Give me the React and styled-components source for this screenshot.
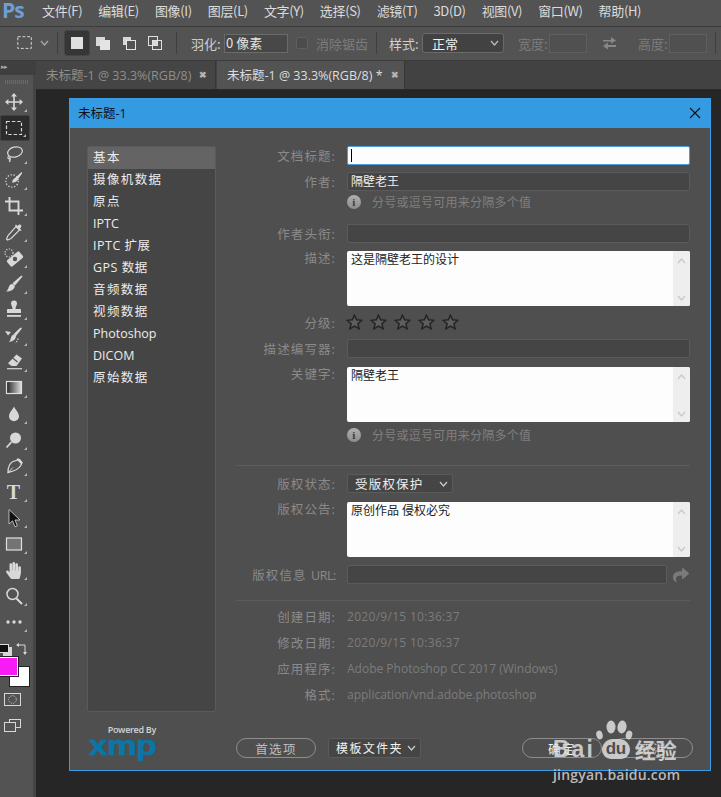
import styled, { createGlobalStyle } from "styled-components"
import { FaHandPaper, FaShare } from "react-icons/fa"

const Global = createGlobalStyle`
    html, body { margin: 0; padding: 0; background: #262626; }
    * { box-sizing: border-box; }
    body {
        width: 721px;
        height: 797px;
        overflow: hidden;
        font-family: "Open Sans", "Noto Sans CJK SC", sans-serif;
        font-size: 12px;
    }
`

const Page = styled.div`
    position: relative;
    width: 721px;
    height: 797px;
    display: flex;
    flex-direction: column;
    overflow: hidden;
`

/* top menu */
const MenuBar = styled.div`
    height: 26px;
    flex: none;
    display: flex;
    align-items: center;
    background: #535353;
    color: #dcdcdc;
    padding-bottom: 5px;
`
const PsLogo = styled.div`
    width: 42px;
    padding-left: 2px;
    font: bold 21px/21px "Open Sans", sans-serif;
    color: #6f9fd0;
    letter-spacing: -1px;
`
const MenuItem = styled.div`
    margin-right: 16px;
    white-space: nowrap;
    font-size: 13px;
    letter-spacing: -0.35px;
    font-family: "Noto Sans CJK SC", sans-serif;
`

/* options bar */
const OptionsBar = styled.div`
    height: 35px;
    flex: none;
    display: flex;
    align-items: center;
    background: #535353;
    border-top: 1px solid #3c3c3c;
    border-bottom: 1px solid #3c3c3c;
    color: #d0d0d0;
    font-family: "Noto Sans CJK SC", sans-serif;
    font-size: 13px;
    padding: 0 0 1px 16px;
`
const Spacer = styled.span`
    width: ${p => p.$w}px;
    flex: none;
`
const Sep = styled.div`
    width: 1px;
    height: 22px;
    background: #3f3f3f;
    margin: 0 ${p => p.$right ?? 6}px 0 ${p => p.$left ?? 8}px;
`
const ModeButton = styled.div`
    width: 26px;
    height: 26px;
    border-radius: 3px;
    display: flex;
    align-items: center;
    justify-content: center;
    background: ${p => (p.$on ? "#363636" : "transparent")};
    border: 1px solid ${p => (p.$on ? "#444" : "transparent")};
`
const OptLabel = styled.span`
    white-space: nowrap;
    width: ${p => p.$w}px;
    color: ${p => (p.$dim ? "#7c7c7c" : "#cfcfcf")};
`
const OptInput = styled.div`
    width: ${p => p.$w}px;
    height: 19px;
    margin-right: ${p => p.$gap ?? 0}px;
    border: 1px solid ${p => (p.$dim ? "#5f5f5f" : "#6a6a6a")};
    background: ${p => (p.$dim ? "#505050" : "#484848")};
    padding-left: 1px;
    color: #e4e4e4;
    line-height: 16px;
    font-size: 13px;
`
const CheckBox = styled.div`
    width: 12px;
    height: 12px;
    border: 1px solid #5f5f5f;
    border-radius: 2px;
    background: #4c4c4c;
    margin: 0 8px;
`
const OptSelect = styled.div`
    width: 82px;
    height: 20px;
    border: 1px solid #6a6a6a;
    border-radius: 3px;
    background: #424242;
    color: #f0f0f0;
    padding: 0 4px 0 9px;
    display: flex;
    align-items: center;
    justify-content: space-between;
    margin: 0 14px 0 5px;
`

/* tab row and work area */
const Work = styled.div`
    flex: 1;
    display: flex;
    min-height: 0;
`
const ToolPanel = styled.div`
    position: relative;
    width: 36px;
    flex: none;
    background: #535353;
    border-right: 3px solid #454545;
    display: flex;
    flex-direction: column;
`
const PanelHead = styled.div`
    height: 14px;
    background: #3f3f3f;
    color: #aaa;
    font-size: 7px;
    line-height: 12px;
    padding-left: 1px;
    letter-spacing: -1px;
    margin-right: -3px;
`
const Grip = styled.div`
    height: 4px;
    margin: 5px 4px 5px 5px;
    background: repeating-linear-gradient(90deg, #6a6a6a 0 1px, transparent 1px 2px);
`
const Tool = styled.div`
    position: relative;
    height: 26px;
    width: 30px;
    flex: none;
    display: flex;
    align-items: center;
    justify-content: center;
    padding-right: 3px;
    color: #d8d8d8;
    border-radius: 2px;
    ${p => p.$on && "background: #2c2c2c; border: 1px solid #414141;"}
    &::after {
        content: "";
        position: absolute;
        right: 3px;
        bottom: 3px;
        border-style: solid;
        border-width: 0 0 3px 3px;
        border-color: transparent transparent #b4b4b4 transparent;
    }
`
const TypeTool = styled.span`
    font: bold 20px "Liberation Serif", serif;
    color: #d8d8d8;
`
const ColorBlock = styled.div`
    position: relative;
    height: 47px;
    margin-top: 5px;
    flex: none;
`
const MiniColors = styled.div`
    position: absolute;
    left: 0;
    top: 4px;
    width: 9px;
    height: 9px;
    background: #111;
    border: 1px solid #ddd;
    border-left: 0;
    box-shadow: 3px 3px 0 #d8d8d8;
`
const SwapIcon = styled.div`
    position: absolute;
    left: 16px;
    top: 3px;
    line-height: 0;
`
const Swatch = styled.div`
    position: absolute;
    left: ${p => p.$x}px;
    top: ${p => p.$y}px;
    width: ${p => p.$w}px;
    height: ${p => p.$w}px;
    background: ${p => p.$c};
    border: 1px solid #fff;
    outline: 1px solid #222;
`
const BottomTool = styled.div`
    height: 26px;
    width: 30px;
    display: flex;
    align-items: center;
    justify-content: center;
    padding-right: 4px;
`

const Main = styled.div`
    flex: 1;
    display: flex;
    flex-direction: column;
    min-width: 0;
`
const TabRow = styled.div`
    height: 29px;
    flex: none;
    display: flex;
    background: #424242;
    border-bottom: 1px solid #2b2b2b;
`
const Tab = styled.div`
    width: ${p => p.$w}px;
    height: 28px;
    flex: none;
    display: flex;
    align-items: center;
    padding: 0 0 2px 10px;
    gap: 8px;
    white-space: nowrap;
    margin-right: 1px;
    font-size: 12.5px;
    background: ${p => (p.$on ? "#535353" : "#454545")};
    color: ${p => (p.$on ? "#dddddd" : "#8e8e8e")};
    border-right: 1px solid #363636;
`
const TabClose = styled.span`
    color: #b4b4b4;
    font-size: 9px;
    font-weight: bold;
`
const Canvas = styled.div`
    flex: 1;
    background: #262626;
    padding: 8px 0 0 33px;
`

/* dialog */
const Dialog = styled.div`
    width: 642px;
    height: 673px;
    background: #4f4f4f;
    border: 1px solid #3a9ce4;
    display: flex;
    flex-direction: column;
`
const TitleBar = styled.div`
    height: 29px;
    flex: none;
    background: #349ae1;
    color: #111;
    display: flex;
    align-items: center;
    justify-content: space-between;
    padding: 0 9px 2px 8px;
    font-size: 12.5px;
`
const DialogBody = styled.div`
    flex: 1;
    display: flex;
    min-height: 0;
    padding: 18px 20px 0 17px;
`
const Side = styled.div`
    width: 129px;
    flex: none;
    margin-right: 20px;
    display: flex;
    flex-direction: column;
`
const CategoryList = styled.div`
    height: 566px;
    background: #454545;
    border: 1px solid #5a5a5a;
    border-radius: 2px;
`
const Category = styled.div`
    height: 22px;
    padding-left: 5px;
    line-height: 21px;
    color: #ececec;
    font-size: 12.5px;
    letter-spacing: ${p => p.$spacing}px;
    background: ${p => (p.$on ? "#646464" : "transparent")};
`
const XmpMark = styled.div`
    width: 68px;
    margin: 12px 0 0 1px;
    display: flex;
    flex-direction: column;
    align-items: flex-end;
`
const PoweredBy = styled.div`
    font: 600 9px/12px "Open Sans", sans-serif;
    color: #d4d4d4;
    white-space: nowrap;
    letter-spacing: -0.3px;
`
const XmpText = styled.div`
    font: bold 27px/20px "Liberation Sans", sans-serif;
    color: #0b76a6;
    -webkit-text-stroke: 0.6px #0b76a6;
    letter-spacing: -0.5px;
    transform: scaleX(1.24);
    transform-origin: right;
`

const Form = styled.div`
    flex: 1;
    display: flex;
    flex-direction: column;
    min-width: 0;
`
const Row = styled.div`
    display: flex;
    align-items: ${p => (p.$top ? "flex-start" : "center")};
    height: ${p => p.$h ?? 19}px;
    flex: none;
    margin-top: ${p => p.$mt ?? 0}px;
`
const Label = styled.div`
    width: 100px;
    flex: none;
    margin-right: 11px;
    text-align: right;
    color: #8a8a8a;
    letter-spacing: 1.1px;
    font-size: 12.5px;
    white-space: nowrap;
    ${p => p.$top && "line-height: 16px;"}
`
const LabelLatin = styled.span`
    letter-spacing: -0.4px;
`
const Field = styled.div`
    flex: 1;
    height: 19px;
    background: ${p => (p.$focus ? "#fdfdfd" : "#454545")};
    border: 1px solid ${p => (p.$focus ? "#4d9ee0" : "#5b5b5b")};
    border-radius: 2px;
    color: #efefef;
    padding-left: 3px;
    line-height: 18px;
    font-size: 12px;
`
const Caret = styled.div`
    width: 1px;
    height: 13px;
    margin-top: 2px;
    background: #000;
`
const TextArea = styled.div`
    flex: 1;
    height: 55px;
    background: #fdfdfd;
    border-radius: 2px;
    color: #222;
    padding-left: 4px;
    line-height: 17px;
    font-size: 12px;
    display: flex;
    justify-content: space-between;
`
const ScrollTrack = styled.div`
    width: 17px;
    background: #eeeeee;
    border-radius: 0 2px 2px 0;
    display: flex;
    flex-direction: column;
    justify-content: space-between;
    align-items: center;
    padding: 7px 0 5px;
`
const HintRow = styled.div`
    display: flex;
    align-items: center;
    height: 14px;
    flex: none;
    margin-top: ${p => p.$mt ?? 4}px;
    padding-left: 111px;
    color: #7f7f7f;
    font-size: 12px;
    letter-spacing: 0.25px;
    gap: 11px;
`
const InfoIcon = styled.span`
    width: 14px;
    height: 14px;
    border-radius: 50%;
    background: linear-gradient(#b0b0b0, #8c8c8c);
    color: #3c3c3c;
    font: bold 11px/14px "Liberation Serif", serif;
    text-align: center;
`
const Stars = styled.div`
    display: flex;
    gap: 7px;
    margin-left: -1px;
`
const Divider = styled.div`
    height: 1px;
    flex: none;
    background: #5c5c5c;
    margin-top: ${p => p.$mt}px;
`
const SelectBox = styled.div`
    width: 106px;
    height: 19px;
    background: #454545;
    border: 1px solid #5b5b5b;
    border-radius: 2px;
    color: #f0f0f0;
    display: flex;
    align-items: center;
    justify-content: space-between;
    padding: 0 4px 0 7px;
    letter-spacing: 1.2px;
    font-size: 12.5px;
`
const Meta = styled.div`
    color: #7c7c7c;
    font-size: 12px;
    letter-spacing: ${p => (p.$date ? "0.3px" : "0")};
`
const ShareIcon = styled.div`
    width: 23px;
    flex: none;
    padding-left: 6px;
    color: #7a7a7a;
    line-height: 0;
`
const Footer = styled.div`
    display: flex;
    align-items: center;
    height: 20px;
    margin-top: 34px;
`
const PillButton = styled.div`
    width: 80px;
    height: 20px;
    flex: none;
    border: 1px solid #8e8e8e;
    border-radius: 10px;
    display: flex;
    align-items: center;
    justify-content: center;
    color: ${p => p.$c ?? "#bdbdbd"};
    letter-spacing: 1.4px;
    font-size: 12.5px;
    margin-left: ${p => p.$ml ?? 0}px;
`
const TemplateSelect = styled.div`
    width: 93px;
    height: 20px;
    flex: none;
    margin-left: 12px;
    background: #454545;
    border: 1px solid #5a5a5a;
    border-radius: 2px;
    color: #f2f2f2;
    display: flex;
    align-items: center;
    justify-content: space-between;
    padding: 0 4px 0 7px;
    letter-spacing: 1.4px;
    font-size: 12px;
    white-space: nowrap;
`

/* watermark */
const Watermark = styled.div`
    position: absolute;
    left: 553px;
    top: 720px;
    width: 130px;
    color: rgba(222, 222, 222, 0.85);
`
const PawToes = styled.svg`
    display: block;
    margin-left: 42px;
`
const WatermarkName = styled.div`
    display: flex;
    align-items: center;
    height: 20px;
    margin-top: -1px;
    font: bold 23px/20px "Liberation Sans", sans-serif;
    letter-spacing: 2px;
    white-space: nowrap;
`
const PawPad = styled.span`
    width: 28px;
    height: 20px;
    margin: 0 5px 0 7px;
    border-radius: 11px 11px 9px 9px;
    background: rgba(222, 222, 222, 0.85);
    color: #4f4f4f;
    font-size: 17px;
    text-align: center;
    letter-spacing: -0.3px;
`
const WatermarkCjk = styled.span`
    font: bold 21px/20px "Noto Sans CJK SC", sans-serif;
    letter-spacing: 0;
`
const WatermarkSite = styled.div`
    margin-top: 7px;
    font: 600 14px/18px "Open Sans", sans-serif;
    color: rgba(205, 205, 205, 0.9);
    white-space: nowrap;
    letter-spacing: 0.2px;
`

const Chevron = ({ up, c = "#c8c8c8", w = 9 }) => (
    <svg width={w} height="6" viewBox="0 0 9 6" fill="none" stroke={c} strokeWidth="1.3">
        <polyline points={up ? "1,5 4.5,1 8,5" : "1,1 4.5,5 8,1"} />
    </svg>
)

const Scroll = () => (
    <ScrollTrack>
        <Chevron up />
        <Chevron />
    </ScrollTrack>
)

const Star = () => (
    <svg width="17" height="16" viewBox="0 0 17 16">
        <polygon points="8.5,1.2 10.6,5.8 15.8,6.3 11.9,9.7 13.1,14.8 8.5,12.1 3.9,14.8 5.1,9.7 1.2,6.3 6.4,5.8" fill="#5e5e5e" stroke="#242424" strokeWidth="1.5" />
    </svg>
)

const Ico = ({ children, s = 20 }) => (
    <svg width={s} height={s} viewBox="0 0 20 20" fill="none" stroke="#d8d8d8" strokeWidth="1.4">
        {children}
    </svg>
)

const tools = [
    { key: "move", d: <Ico><path d="M10 2.5v15M2.5 10h15" strokeWidth="1.6" /><path d="M10 1l3 3.4H7zM10 19l3-3.4H7zM1 10l3.4-3v6zM19 10l-3.4-3v6z" fill="#d8d8d8" stroke="none" /></Ico> },
    { key: "marquee", on: true, d: <Ico><rect x="2.5" y="3.5" width="15" height="13" strokeDasharray="3.4 2" strokeWidth="1.2" /></Ico> },
    { key: "lasso", d: <Ico><ellipse cx="11" cy="8" rx="7.5" ry="5" transform="rotate(-14 11 8)" strokeWidth="1.2" /><path d="M4.5 12c-1.5 2 .2 3.6 1.6 2.6M5.5 12.5c1 2 1 4-.2 5.5" strokeWidth="1.2" /></Ico> },
    { key: "quick", d: <Ico><circle cx="8" cy="11" r="6.2" strokeDasharray="1.3 1.7" strokeWidth="1.3" /><path d="M8 12.5c.3-2.5 1.5-3.5 3-4.5l6-5.5c1-.6 1.4.3 1 1l-4.5 6.5c-1 1.5-2.5 3-5.5 2.5z" fill="#d8d8d8" stroke="none" /></Ico> },
    { key: "crop", d: <Ico><path d="M5.5 1v13.5H19M1 5.5h13.5V19" strokeWidth="1.9" /></Ico> },
    { key: "dropper", d: <Ico><path d="M12 4.5l3.5 3.5L7 16.5 3.5 18l-1-1L4 13.5z" strokeWidth="1.2" /><path d="M11 3.5l5.5 5.5 1-1-1.6-1.6 1-1c1.5-1.6-.8-3.8-2.3-2.3l-1 1L12 2.4z" fill="#d8d8d8" stroke="none" /></Ico> },
    { key: "heal", d: <Ico><rect x="3" y="7" width="16" height="8" rx="1.5" transform="rotate(-40 11 11)" fill="#d8d8d8" stroke="none" /><circle cx="11" cy="11" r="2.2" fill="#535353" stroke="none" /><circle cx="5" cy="5" r="4" strokeDasharray="1.1 1.5" strokeWidth="1.2" /></Ico> },
    { key: "brush", d: <Ico><path d="M18 1.5c.6.3.4 1-.1 1.7L11 11.5 8.5 9.2 16.5 2.3zM8 10c2.5.2 3.2 2 2.5 3.5C9.2 16.3 5.5 17.8 2 17.5c1.5-1 2-2.3 2.6-4C5.2 11.5 6.5 10.2 8 10z" fill="#d8d8d8" stroke="none" /></Ico> },
    { key: "stamp", d: <Ico><path d="M7 3.5a3 3 0 016 0c0 2-1.5 3-1.5 5.500h4.500c.8 0 1 .6 1 1.200V13H3v-2.800c0-.6.3-1.200 1-1.200h4.500C8.500 6.500 7 5.500 7 3.500z" fill="#d8d8d8" stroke="none" /><rect x="3" y="15" width="14" height="1.8" fill="#d8d8d8" stroke="none" /></Ico> },
    { key: "history", d: <Ico><path d="M17.5 1.5c.6.5.3 1-.2 1.700L12 10l-2.200-2L16 2zM9.500 8.500c2 .2 2.800 1.600 2.300 3-.9 2.500-3.500 4-7 4.500 1.300-1 1.500-2 2-3.500.4-2 1.500-3.800 2.700-4z" fill="#d8d8d8" stroke="none" /><path d="M14 12.500a6 6 0 01-3 4.500" strokeDasharray="1.2 1.5" /><path d="M1 5l6 1-3 3.500z" fill="#d8d8d8" stroke="none" /></Ico> },
    { key: "eraser", d: <Ico><path d="M12.5 2.5l5.500 4-5.500 7.500H7.500L4 11.300z" fill="#d8d8d8" stroke="none" /><path d="M3 16.700h15" strokeWidth="1.2" /><path d="M8 5.500l5.500 4.500" stroke="#535353" strokeWidth="1.2" /></Ico> },
    { key: "gradient", d: <Ico><defs><linearGradient id="gr" x1="0" x2="1" y1="0" y2="0"><stop offset="0" stopColor="#222" /><stop offset="1" stopColor="#e0e0e0" /></linearGradient></defs><rect x="2.5" y="3.5" width="15" height="12" fill="url(#gr)" stroke="#e0e0e0" strokeWidth="1.2" /></Ico> },
    { key: "blur", d: <Ico><path d="M10 2.5c1 2.800 5 6 5 9.800a5 5 0 01-10 0c0-3.800 4-7 5-9.800z" fill="#d8d8d8" stroke="none" /></Ico> },
    { key: "dodge", d: <Ico><circle cx="11.5" cy="8" r="5.5" fill="#d8d8d8" stroke="none" /><path d="M7.5 12L2.5 17.5" strokeWidth="1.8" /></Ico> },
    { key: "pen", d: <Ico><path d="M15.5 3.5l2.500 3-1.500 3.500c-2 3-5.500 5-12.500 6.500C4 12 5 7.500 9 5.500z" strokeWidth="1.3" /><path d="M14 2l4.500 4.500-1.500 1.500-4.500-4.500z" fill="#d8d8d8" stroke="none" /><path d="M4 16.500l5-5" strokeWidth="1" /></Ico> },
    { key: "type", d: <TypeTool>T</TypeTool> },
    { key: "select", d: <Ico><path d="M5 1.5l11 10.500h-5l2.300 5.800-2.300 1-2.500-6L5 16z" fill="#111" stroke="#d8d8d8" strokeWidth="0.8" /></Ico> },
    { key: "shape", d: <Ico><rect x="2.5" y="4" width="15" height="12" fill="#747474" stroke="#e0e0e0" strokeWidth="1.2" /></Ico> },
    { key: "hand", d: <FaHandPaper size={17} /> },
    { key: "zoom", d: <Ico><circle cx="8.5" cy="8" r="5.5" strokeWidth="1.5" /><path d="M12.5 12.5L18 18" strokeWidth="2" /></Ico> },
    { key: "more", d: <Ico><circle cx="4" cy="10" r="1.7" fill="#d8d8d8" stroke="none" /><circle cx="10" cy="10" r="1.7" fill="#d8d8d8" stroke="none" /><circle cx="16" cy="10" r="1.7" fill="#d8d8d8" stroke="none" /></Ico> },
]

const menu = ["文件(F)", "编辑(E)", "图像(I)", "图层(L)", "文字(Y)", "选择(S)", "滤镜(T)", "3D(D)", "视图(V)", "窗口(W)", "帮助(H)"]

const categories = [
    ["基本", 1.4],
    ["摄像机数据", 1.4],
    ["原点", 1.4],
    ["IPTC", 0],
    ["IPTC 扩展", 0.5],
    ["GPS 数据", 0.5],
    ["音频数据", 1.4],
    ["视频数据", 1.4],
    ["Photoshop", 0],
    ["DICOM", 0],
    ["原始数据", 1.4],
]

const metaRows = [
    ["创建日期:", "2020/9/15 10:36:37", 6, true],
    ["修改日期:", "2020/9/15 10:36:37", 7, true],
    ["应用程序:", "Adobe Photoshop CC 2017 (Windows)", 7, false],
    ["格式:", "application/vnd.adobe.photoshop", 7, false],
]

const App = () => (
    <Page>
        <Global />
        <MenuBar>
            <PsLogo>Ps</PsLogo>
            {menu.map(m => <MenuItem key={m}>{m}</MenuItem>)}
        </MenuBar>

        <OptionsBar>
            <Ico s={18}><rect x="2" y="3" width="15" height="13" strokeDasharray="3.2 2" strokeWidth="1.1" /></Ico>
            <Spacer $w={6} />
            <Chevron c="#a8a8a8" />
            <Sep />
            <ModeButton $on>
                <svg width="12" height="12"><rect width="12" height="12" fill="#e0e0e0" /></svg>
            </ModeButton>
            <ModeButton>
                <svg width="15" height="15"><rect width="9" height="9" y="1" fill="#d8d8d8" /><rect x="4" y="4" width="10" height="10" fill="#e4e4e4" /></svg>
            </ModeButton>
            <ModeButton>
                <svg width="13" height="13" fill="none"><rect width="8" height="8" fill="#d8d8d8" /><rect x="3.5" y="3.5" width="9" height="9" stroke="#e4e4e4" fill="#535353" /></svg>
            </ModeButton>
            <ModeButton>
                <svg width="15" height="15" fill="none" stroke="#e0e0e0"><rect x=".5" y=".5" width="9" height="9" /><rect x="4.5" y="4.5" width="9" height="9" /><rect x="4.5" y="4.5" width="5" height="5" fill="#d8d8d8" /></svg>
            </ModeButton>
            <Sep $left={8} $right={14} />
            <OptLabel $w={33}>羽化:</OptLabel>
            <OptInput $w={64}>0 像素</OptInput>
            <CheckBox />
            <OptLabel $w={52} $dim>消除锯齿</OptLabel>
            <Sep $left={8} $right={12} />
            <OptLabel $w={28}>样式:</OptLabel>
            <OptSelect>正常 <Chevron c="#bbb" /></OptSelect>
            <OptLabel $w={31} $dim>宽度:</OptLabel>
            <OptInput $w={38} $dim $gap={15} />
            <svg width="15" height="14" viewBox="0 0 15 14"><path d="M1 4h8V1l5 3.5-5 3V5.5H1zM14 9H6V6.5L1 10l5 3.500V11h8z" fill="#888" /></svg>
            <Spacer $w={21} />
            <OptLabel $w={31} $dim>高度:</OptLabel>
            <OptInput $w={38} $dim />
            <Sep $left={8} $right={0} />
        </OptionsBar>

        <Work>
            <ToolPanel>
                <PanelHead>▸▸</PanelHead>
                <Grip />
                {tools.map(t => <Tool key={t.key} $on={t.on}>{t.d}</Tool>)}
                <ColorBlock>
                    <MiniColors />
                    <SwapIcon>
                        <svg width="12" height="12" viewBox="0 0 12 12" fill="none" stroke="#d8d8d8"><path d="M3 2h6v7" /><path d="M0 2l3-2v4zM9 12l-2-3h4z" fill="#d8d8d8" stroke="none" /></svg>
                    </SwapIcon>
                    <Swatch $x={10} $y={27} $w={19} $c="#fff" />
                    <Swatch $x={-1} $y={17} $w={19} $c="#f81bf5" />
                </ColorBlock>
                <BottomTool>
                    <svg width="18" height="14" fill="none" stroke="#d8d8d8"><rect x=".5" y=".5" width="16" height="12" /><circle cx="8.5" cy="6.5" r="3.8" strokeDasharray="1 1.2" /></svg>
                </BottomTool>
                <BottomTool>
                    <svg width="18" height="14" fill="none" stroke="#d8d8d8"><rect x="5.5" y=".5" width="11" height="8" /><rect x=".5" y="3.5" width="11" height="9" fill="#535353" /></svg>
                </BottomTool>
            </ToolPanel>

            <Main>
                <TabRow>
                    <Tab $w={180}>未标题-1 @ 33.3%(RGB/8) <TabClose>✖</TabClose></Tab>
                    <Tab $w={188} $on>未标题-1 @ 33.3%(RGB/8) * <TabClose>✖</TabClose></Tab>
                </TabRow>
                <Canvas>
                    <Dialog>
                        <TitleBar>
                            未标题-1
                            <svg width="12" height="12" stroke="#111" strokeWidth="1.1"><path d="M1 1l10 10M11 1L1 11" /></svg>
                        </TitleBar>
                        <DialogBody>
                            <Side>
                                <CategoryList>
                                    {categories.map(([c, sp], i) => (
                                        <Category key={c} $on={i === 0} $spacing={sp}>{c}</Category>
                                    ))}
                                </CategoryList>
                                <XmpMark>
                                    <PoweredBy>Powered By</PoweredBy>
                                    <XmpText>xmp</XmpText>
                                </XmpMark>
                            </Side>
                            <Form>
                                <Row>
                                    <Label>文档标题:</Label>
                                    <Field $focus><Caret /></Field>
                                </Row>
                                <Row $mt={7}>
                                    <Label>作者:</Label>
                                    <Field>隔壁老王</Field>
                                </Row>
                                <HintRow $mt={4}><InfoIcon>i</InfoIcon>分号或逗号可用来分隔多个值</HintRow>
                                <Row $mt={15}>
                                    <Label>作者头衔:</Label>
                                    <Field />
                                </Row>
                                <Row $mt={8} $h={55} $top>
                                    <Label $top>描述:</Label>
                                    <TextArea>这是隔壁老王的设计<Scroll /></TextArea>
                                </Row>
                                <Row $mt={7} $h={18}>
                                    <Label>分级:</Label>
                                    <Stars><Star /><Star /><Star /><Star /><Star /></Stars>
                                </Row>
                                <Row $mt={8}>
                                    <Label>描述编写器:</Label>
                                    <Field />
                                </Row>
                                <Row $mt={9} $h={55} $top>
                                    <Label $top>关键字:</Label>
                                    <TextArea>隔壁老王<Scroll /></TextArea>
                                </Row>
                                <HintRow $mt={6}><InfoIcon>i</InfoIcon>分号或逗号可用来分隔多个值</HintRow>
                                <Divider $mt={23} />
                                <Row $mt={8}>
                                    <Label>版权状态:</Label>
                                    <SelectBox>受版权保护 <Chevron /></SelectBox>
                                </Row>
                                <Row $mt={9} $h={55} $top>
                                    <Label $top>版权公告:</Label>
                                    <TextArea>原创作品 侵权必究<Scroll /></TextArea>
                                </Row>
                                <Row $mt={8}>
                                    <Label>版权信息 <LabelLatin>URL:</LabelLatin></Label>
                                    <Field />
                                    <ShareIcon><FaShare size={16} /></ShareIcon>
                                </Row>
                                <Divider $mt={16} />
                                {metaRows.map(([k, v, mt, date]) => (
                                    <Row key={k} $mt={mt}>
                                        <Label>{k}</Label>
                                        <Meta $date={date}>{v}</Meta>
                                    </Row>
                                ))}
                                <Footer>
                                    <PillButton>首选项</PillButton>
                                    <TemplateSelect>模板文件夹 <Chevron /></TemplateSelect>
                                    <PillButton $ml={101} $c="#f4f4f4">确定</PillButton>
                                    <PillButton $ml={11}>取消</PillButton>
                                </Footer>
                            </Form>
                        </DialogBody>
                    </Dialog>
                </Canvas>
            </Main>
        </Work>

        <Watermark>
            <PawToes width="40" height="20" viewBox="0 0 40 20" fill="currentColor">
                <ellipse cx="4.5" cy="15" rx="3.2" ry="4.5" transform="rotate(-15 4.5 15)" />
                <ellipse cx="16" cy="7" rx="4.5" ry="6.5" />
                <ellipse cx="27" cy="7" rx="4.5" ry="6.5" transform="rotate(8 27 7)" />
                <ellipse cx="34" cy="15" rx="3.2" ry="4.5" transform="rotate(15 34 15)" />
            </PawToes>
            <WatermarkName>
                Bai
                <PawPad>du</PawPad>
                <WatermarkCjk>经验</WatermarkCjk>
            </WatermarkName>
            <WatermarkSite>jingyan.baidu.com</WatermarkSite>
        </Watermark>
    </Page>
)

export default App
